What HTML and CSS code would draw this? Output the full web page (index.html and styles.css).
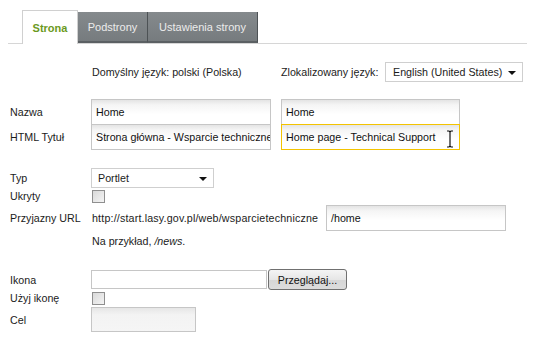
FILE: index.html
```html
<!DOCTYPE html>
<html lang="pl">
<head>
    <meta charset="UTF-8">
    <title>Strona</title>
    <link rel="stylesheet" href="styles.css">
</head>
<body>
    <div class="tabs">
        <div class="tab active">Strona</div>
        <div class="tab">Podstrony</div>
        <div class="tab">Ustawienia strony</div>
    </div>

    <div class="form">
        <div class="row lang-row">
            <div class="label"></div>
            <div class="default-lang">Domyślny język: polski (Polska)</div>
            <div class="local-lang">Zlokalizowany język:</div>
            <div class="select lang-select">English (United States)<span class="arrow"></span></div>
        </div>

        <div class="row name-row">
            <div class="label">Nazwa</div>
            <div class="input wide">Home</div>
            <div class="input wide second">Home</div>
        </div>
        <div class="row title-row">
            <div class="label">HTML Tytuł</div>
            <div class="input wide clip">Strona główna - Wsparcie techniczne</div>
            <div class="input wide second focused">Home page - Technical Support
                <svg class="ibeam" width="8" height="18" viewBox="0 0 8 18">
                    <path d="M1 1h2l1 1 1-1h2M4 2v14M1 17h2l1-1 1 1h2" fill="none" stroke="#111" stroke-width="1.2"/>
                </svg>
            </div>
        </div>

        <div class="row type-row">
            <div class="label">Typ</div>
            <div class="select type-select">Portlet<span class="arrow"></span></div>
        </div>
        <div class="row check-row">
            <div class="label">Ukryty</div>
            <span class="checkbox"></span>
        </div>
        <div class="row url-row">
            <div class="label">Przyjazny URL</div>
            <div class="url-base">http://start.lasy.gov.pl/web/wsparcietechniczne</div>
            <div class="input url-input">/home</div>
        </div>
        <div class="row hint-row">
            <div class="label"></div>
            <div class="hint">Na przykład, <em>/news</em>.</div>
        </div>

        <div class="row icon-row">
            <div class="label">Ikona</div>
            <div class="input file-input"></div>
            <button class="browse">Przeglądaj...</button>
        </div>
        <div class="row check-row second-check">
            <div class="label">Użyj ikonę</div>
            <span class="checkbox"></span>
        </div>
        <div class="row target-row">
            <div class="label">Cel</div>
            <div class="input target-input"></div>
        </div>
    </div>
</body>
</html>
```

FILE: styles.css
```css
* {
    box-sizing: border-box;
}

body {
    margin: 0;
    background: #fff;
    color: #1b1b1b;
    font-family: 'Liberation Sans', Arial, sans-serif;
    font-size: 10.7px;
}

/* tabs */
.tabs {
    display: flex;
    align-items: flex-end;
    height: 44px;
    margin: 0 8px;
    padding-left: 14px;
    border-bottom: 1px solid #d6d6d6;
}

.tab {
    width: 70px;
    height: 31px;
    display: flex;
    align-items: center;
    justify-content: center;
    background: linear-gradient(#858a8d, #767b7e);
    color: #ececec;
    font-size: 11px;
    border-right: 1px solid #4d5255;
    border-bottom: 2px solid #5b6063;
}

.tab.active {
    height: 34px;
    width: 56px;
    margin-bottom: -1px;
    background: #fff;
    color: #6b9a1e;
    font-weight: bold;
    border: 1px solid #d0d0d0;
    border-bottom: none;
}

.tab:last-child {
    width: 110px;
}

/* form rows */
.form {
    padding-left: 10px;
}

.row {
    display: flex;
    align-items: center;
}

.label {
    width: 81px;
    flex-shrink: 0;
}

.lang-row {
    height: 20px;
    margin-top: 18px;
}

.default-lang {
    width: 190px;
    padding-left: 1px;
}

.local-lang {
    width: 104px;
}

.select {
    position: relative;
    display: flex;
    align-items: center;
    height: 20px;
    padding-left: 7px;
    border: 1px solid #cfcfcf;
    background: #fff;
}

.lang-select {
    width: 138px;
}

.arrow {
    position: absolute;
    right: 6px;
    top: 8px;
    border-left: 4px solid transparent;
    border-right: 4px solid transparent;
    border-top: 4px solid #111;
}

.input {
    display: flex;
    align-items: center;
    height: 26px;
    padding-left: 4px;
    border: 1px solid #c6c6c6;
    background: linear-gradient(#e4e4e4 0, #f5f5f5 5px, #fff 60%);
    color: #111;
    white-space: nowrap;
    overflow: hidden;
}

.wide {
    width: 180px;
}

.second {
    margin-left: 10px;
    width: 179px;
}

.name-row {
    margin-top: 17px;
}

.title-row {
    margin-top: -1px;
}

.focused {
    position: relative;
    border-color: #f3c300;
}

.ibeam {
    position: absolute;
    left: 164px;
    top: 5px;
}

.type-row {
    margin-top: 18px;
}

.type-select {
    width: 123px;
    height: 20px;
    padding-left: 6px;
}

.check-row {
    height: 14px;
    margin-top: 1px;
}

.checkbox {
    width: 13px;
    height: 13px;
    margin-left: 1px;
    border: 1px solid #8f8f8f;
    background: linear-gradient(135deg, #d9d9d9, #f4f4f4);
}

.url-row {
    margin-top: 2px;
}

.url-base {
    width: 235px;
    padding-left: 1px;
    letter-spacing: 0.17px;
}

.url-input {
    width: 180px;
}

.hint-row {
    height: 16px;
    margin-top: 2px;
}

.hint {
    padding-left: 1px;
}

.icon-row {
    margin-top: 20px;
    height: 21px;
}

.file-input {
    width: 176px;
    height: 19px;
    background: #fff;
}

.browse {
    width: 79px;
    height: 21px;
    margin-left: 1px;
    padding: 0;
    border: 1px solid #707070;
    border-radius: 3px;
    background: linear-gradient(#f4f4f4, #e6e6e6 50%, #d6d6d6 51%, #dcdcdc);
    font-family: inherit;
    font-size: 10.7px;
    color: #111;
}

.second-check {
    margin-top: 1px;
}

.target-row {
    margin-top: 2px;
}

.target-input {
    width: 105px;
    height: 25px;
    background: linear-gradient(#e6e6e6, #f3f3f3 30%, #f5f5f5);
}
```
